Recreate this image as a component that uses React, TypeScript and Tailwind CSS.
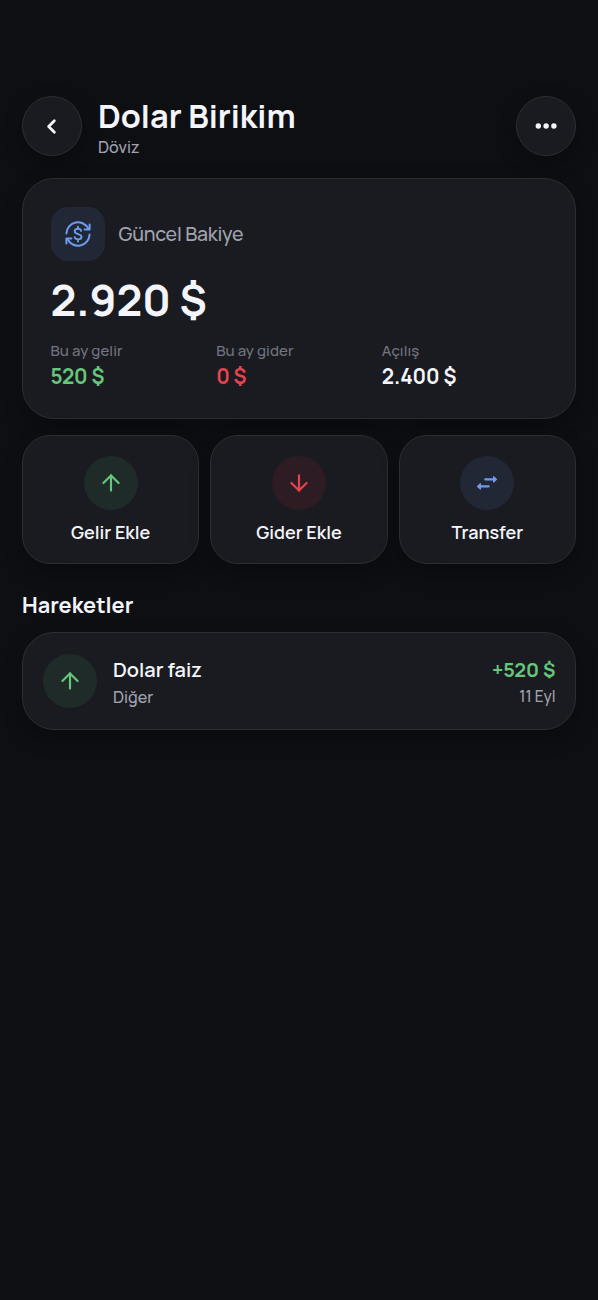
import { ArrowDown, ArrowUp, ChevronLeft } from 'lucide-react'
import type { ReactNode } from 'react'

const surface =
  'border border-[#2d2e33] bg-[#1a1b20] shadow-[0_8px_20px_rgba(0,0,0,0.3)]'

function DotsIcon() {
  return (
    <svg width="24" height="24" viewBox="0 0 24 24" fill="currentColor">
      <circle cx="4.3" cy="12" r="2.7" />
      <circle cx="12.1" cy="12" r="2.7" />
      <circle cx="19.9" cy="12" r="2.7" />
    </svg>
  )
}

function CurrencyIcon() {
  return (
    <svg
      width="28"
      height="28"
      viewBox="0 0 28 28"
      fill="none"
      stroke="currentColor"
      strokeWidth="2"
      strokeLinecap="round"
      strokeLinejoin="round"
    >
      <path d="M2.4 13.4A11.6 11.6 0 0 1 24.4 8.8" />
      <path d="M25.6 14.6A11.6 11.6 0 0 1 3.6 19.2" />
      <path d="M25.6 4.4v5h-5" />
      <path d="M2.4 23.6v-5h5" />
      <path
        d="M17.2 10.9c-.4-1.5-1.7-2.2-3.2-2.2-1.9 0-3.3 1-3.3 2.6 0 3.7 6.8 1.8 6.8 5.5 0 1.6-1.6 2.6-3.4 2.6s-3.1-.9-3.5-2.3M14 6.6v2M14 19.5v2"
        strokeWidth="1.9"
      />
    </svg>
  )
}

function TransferIcon() {
  return (
    <svg
      width="24"
      height="24"
      viewBox="0 0 24 24"
      fill="currentColor"
      stroke="currentColor"
      strokeLinecap="round"
      strokeLinejoin="round"
    >
      <path d="M10.3 8.4h8M13.7 15.4h-8" strokeWidth="2.1" />
      <path d="M18.6 5.7v5.4l2.9-2.7zM5.4 12.7v5.4l-2.9-2.7z" strokeWidth="1.2" />
    </svg>
  )
}

function Stat({ label, value, color }: { label: string; value: string; color: string }) {
  return (
    <div>
      <p className="text-[15px] leading-5 font-medium tracking-[0.005em] text-[#717480]">{label}</p>
      <p className={`mt-px text-[20.6px] leading-7 font-bold tracking-[-0.005em] ${color}`}>
        {value}
      </p>
    </div>
  )
}

function Action({ label, tint, children }: { label: string; tint: string; children: ReactNode }) {
  return (
    <button className={`flex h-[129px] flex-col items-center rounded-[28px] pt-5 ${surface}`}>
      <span className={`flex size-[54px] items-center justify-center rounded-full ${tint}`}>
        {children}
      </span>
      <span className="mt-[11px] text-[18px] leading-[22px] font-semibold">{label}</span>
    </button>
  )
}

export default function App() {
  return (
    <div className="min-h-[1300px] bg-[#0e0f13] px-[22px] pt-24 font-['Manrope','Inter',sans-serif] text-[#f4f5fa]">
      <header className="flex h-[60px] items-start">
        <button className={`flex size-[60px] items-center justify-center rounded-full pr-0.5 ${surface}`}>
          <ChevronLeft size={23} strokeWidth={2.9} />
        </button>
        <div className="ml-4 flex-1">
          <h1 className="text-[32.5px] leading-10 font-bold">Dolar Birikim</h1>
          <p className="text-[16.2px] leading-[22px] font-medium text-[#a0a3af]">Döviz</p>
        </div>
        <button className={`flex size-[60px] items-center justify-center rounded-full ${surface}`}>
          <DotsIcon />
        </button>
      </header>

      <section className={`mt-[22px] h-[241px] rounded-[32px] px-[27.5px] pt-7 ${surface}`}>
        <div className="flex items-center gap-3.5">
          <span className="flex size-[54px] items-center justify-center rounded-[17px] bg-[#212735] text-[#6f9bee]">
            <CurrencyIcon />
          </span>
          <span className="text-[19.5px] leading-7 font-medium tracking-[-0.012em] text-[#a0a3af]">
            Güncel Bakiye
          </span>
        </div>
        <p className="mt-[11px] text-[43.4px] leading-[56px] font-bold">2.920 $</p>
        <div className="mt-[13px] grid grid-cols-3">
          <Stat label="Bu ay gelir" value="520 $" color="text-[#66c67c]" />
          <Stat label="Bu ay gider" value="0 $" color="text-[#e5434f]" />
          <Stat label="Açılış" value="2.400 $" color="text-[#f4f5fa]" />
        </div>
      </section>

      <div className="mt-4 grid grid-cols-3 gap-[11px]">
        <Action label="Gelir Ekle" tint="bg-[#1f2b29] text-[#66c67c]">
          <ArrowUp size={26} />
        </Action>
        <Action label="Gider Ekle" tint="bg-[#2d1c23] text-[#e5434f]">
          <ArrowDown size={26} />
        </Action>
        <Action label="Transfer" tint="bg-[#212735] text-[#6f9bee]">
          <TransferIcon />
        </Action>
      </div>

      <h2 className="mt-[27px] text-[21.7px] leading-7 font-bold">Hareketler</h2>

      <div className={`mt-[13px] flex h-[98px] items-start rounded-[32px] px-[19.5px] pt-5 ${surface}`}>
        <span className="mt-px flex size-[54px] items-center justify-center rounded-full bg-[#1f2b29] text-[#66c67c]">
          <ArrowUp size={26} />
        </span>
        <div className="mt-1 ml-[16.5px] flex-1">
          <p className="text-[20px] leading-[26px] font-semibold">Dolar faiz</p>
          <p className="mt-0.5 text-[16.2px] leading-6 font-medium text-[#a0a3af]">Diğer</p>
        </div>
        <div className="mt-1 text-right">
          <p className="text-[19.8px] leading-[26px] font-bold text-[#66c67c]">+520 $</p>
          <p className="mt-0.5 text-[15.3px] leading-6 font-medium text-[#a0a3af]">11 Eyl</p>
        </div>
      </div>
    </div>
  )
}
